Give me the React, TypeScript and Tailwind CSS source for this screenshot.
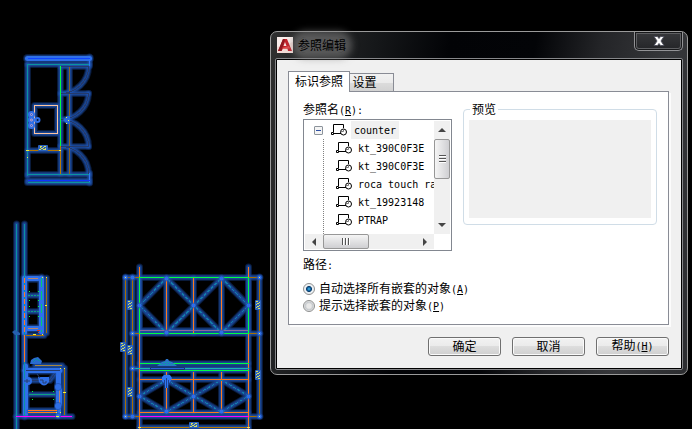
import { ReactNode, useState } from "react";
import clsx from "clsx";

interface Line {
  d: string;
  color?: string;
  dash?: string;
  wide?: boolean;
}

const BLOCKS = ["kt_390C0F3E", "kt_390C0F3E", "roca touch ra", "kt_19923148", "PTRAP"];

const TEAL = "#0b93a0";
const GREEN = "#00ff40";
const ORANGE = "#ff7a1a";
const BROWN = "#a86f00";
const MAGENTA = "#ff00ff";
const DARK = "#243a6b";

const PLAN_LINES: Line[] = [
  { d: "M27.5 64.5H89.5" },
  { d: "M89.5 57V66", color: "#2f78f5" },
  { d: "M27.5 64V176" },
  { d: "M69.5 66V174", color: "#8a6420" },
  { d: "M60.5 146V174", color: "#b87900" },
  { d: "M60.5 66.5H88.5M60.5 93.5H88.5M60.5 146.5H88.5", color: DARK },
  { d: "M88.5 66.5A28 27 0 0 1 60.5 93.5", color: DARK },
  { d: "M88.5 93.5A28 27 0 0 1 60.5 119.5", color: DARK },
  { d: "M88.5 146.5A28 27 0 0 0 60.5 119.5", color: DARK },
  { d: "M60.5 146.5A28 27 0 0 1 88.5 173.5", color: DARK },
  { d: "M60.5 66V146", color: GREEN },
  { d: "M27.5 58.5H89.5", color: "#0f45ff", wide: true },
  { d: "M27.5 174.5H89.5" },
  { d: "M89.5 173V183", color: "#2f78f5" },
  { d: "M27.5 180.5H89.5", color: "#0f35ff" },
  { d: "M27.5 182.5H89.5" },
  { d: "M34.5 105.5h23v28h-23z", color: "#ffc49c" },
  { d: "M27.5 150.5H60.5", color: "#b87900" },
];

const SIDE_LINES: Line[] = [
  { d: "M16.5 224V429" },
  { d: "M24.5 224V417" },
  { d: "M24.5 278V333", color: ORANGE, dash: "5 2", wide: true },
  { d: "M24.5 335V362", color: ORANGE },
  { d: "M28 278.5H38", color: "#b8846c", wide: true },
  { d: "M28 295.5H40", color: "#10a080", dash: "2 1" },
  { d: "M28 311.5H40", color: "#10a080", dash: "2 1" },
  { d: "M28 328.5H38", color: "#b8846c", wide: true },
  { d: "M41.5 278V332", color: "#00c874", dash: "9 4", wide: true },
  { d: "M46.5 278V333", color: BROWN },
  { d: "M26 335.5H44", color: BROWN },
  { d: "M35 365.5H62", color: "#a8863c" },
  { d: "M25 370.5H60", color: DARK, wide: true },
  { d: "M59.5 390V404", color: "#b8846c", wide: true },
  { d: "M58.5 373V415", color: "#2f6fe6", wide: true },
  { d: "M64.5 368V415", color: BROWN },
  { d: "M25.5 366V415", color: "#2f6fe6", wide: true },
  { d: "M30 380.5H50L55 374", color: DARK },
  { d: "M29 394.5H55", color: "#10a080" },
  { d: "M28 410.5H57", color: ORANGE },
  { d: "M28 412.5H57", color: ORANGE },
  { d: "M16 416.5H72", color: MAGENTA },
];

const FRONT_LINES: Line[] = [
  { d: "M125.5 277V416", color: BROWN },
  { d: "M132.5 277V416", color: BROWN },
  { d: "M259.5 277V416", color: BROWN },
  { d: "M125.5 277.5H139M248 277.5H260M132 333.5H139M248 333.5H260", color: BROWN },
  { d: "M139.5 267V429M248.5 267V429", color: ORANGE },
  { d: "M166.5 278V333M193.5 278V333M221.5 278V333", color: ORANGE },
  { d: "M166.5 372V412M193.5 372V412M221.5 372V412", color: ORANGE },
  {
    d: "M166.5 278L139.5 305.5L166.5 333L221.5 278L248.5 305.5L221.5 333L166.5 278",
    color: "#127fa8",
    dash: "3 2",
  },
  {
    d: "M166.5 380L139.5 396L166.5 412L221.5 380L248.5 396L221.5 412L166.5 380",
    color: "#127fa8",
    dash: "3 2",
  },
  { d: "M139.5 330.5H248.5", color: "#876d9b" },
  { d: "M139.5 277V334M248.5 277V334", color: GREEN },
  { d: "M139 277.5H249M139 333.5H249", color: GREEN },
  { d: "M139.5 363.5H248.5", color: GREEN },
  { d: "M132 368.5H248.5", color: "#17b4b0" },
  { d: "M139.5 370.5H248.5", color: GREEN },
  { d: "M139.5 379.5H248.5", color: ORANGE },
  { d: "M139.5 412.5H248.5", color: ORANGE },
  { d: "M125.5 416.5H139M248 416.5H260", color: BROWN },
  { d: "M139.5 416.5H248.5", color: MAGENTA },
  { d: "M139.5 427.5H248.5", color: "#b87900" },
];

const FRONT_NODES = [
  [125.5, 277.5],
  [132.5, 277.5],
  [166.5, 278.5],
  [221.5, 278.5],
  [259.5, 277.5],
  [139.5, 305.5],
  [193.5, 305.5],
  [248.5, 305.5],
  [132.5, 333.5],
  [166.5, 332.5],
  [221.5, 332.5],
  [259.5, 333.5],
  [132.5, 368.5],
  [139.5, 396.5],
  [193.5, 396.5],
  [248.5, 396.5],
  [166.5, 411.5],
  [221.5, 411.5],
  [125.5, 416.5],
  [132.5, 416.5],
  [259.5, 416.5],
];

// Selected geometry: all the halos first, so that no halo covers a layer colour
function Lines({ lines }: { lines: Line[] }) {
  return (
    <g fill="none" strokeLinecap="round" strokeLinejoin="round">
      {lines.map(({ d, wide }, i) => (
        <path key={i} d={d} stroke="#0f2c60" strokeOpacity="0.6" strokeWidth={wide ? 9 : 7} />
      ))}
      {lines.map(({ d, wide }, i) => (
        <path key={i} d={d} stroke="#1b4896" strokeOpacity="0.6" strokeWidth={wide ? 7 : 5} />
      ))}
      {lines.map(({ d, wide }, i) => (
        <path
          key={i}
          d={d}
          stroke={wide ? "#2e70ea" : "#1f55b4"}
          strokeOpacity={wide ? 1 : 0.5}
          strokeWidth={wide ? 5 : 3}
        />
      ))}
      {lines.map(({ d, color = TEAL, dash }, i) => (
        <path
          key={i}
          d={d}
          stroke={color}
          strokeLinecap="butt"
          strokeDasharray={dash}
          shapeRendering="crispEdges"
        />
      ))}
    </g>
  );
}

function Node({ x, y, r = 2 }: { x: number; y: number; r?: number }) {
  return (
    <g>
      <circle cx={x} cy={y} r={r + 1} fill="#1c4fae" fillOpacity="0.6" />
      <circle cx={x} cy={y} r={r} fill="#2f6fe6" />
    </g>
  );
}

function DimMark({ x, y, vertical }: { x: number; y: number; vertical?: boolean }) {
  const d = vertical
    ? "M-2 -3.5h2M1 -2.5h1M-1 -1.5h2M-2 -0.5h1M1 0.5h1M-1 1.5h2M-2 2.5h1M0 3.5h2"
    : "M-3 -1.5h2M1 -1.5h2M-3 -0.5h1M0 -0.5h1M-2 0.5h2M2 0.5h1M-4 1.5h2M0 1.5h3";
  return (
    <g transform={`translate(${x} ${y})`}>
      <rect
        x={vertical ? -3 : -5}
        y={vertical ? -5 : -3}
        width={vertical ? 6 : 10}
        height={vertical ? 10 : 6}
        rx="1"
        fill="#2c62bd"
      />
      <path d={d} stroke="#d5de5c" fill="none" />
    </g>
  );
}

function PlanView() {
  return (
    <g>
      <Lines lines={PLAN_LINES} />
      <g fill="#2d61c0" stroke="#2f6fe6" strokeWidth="3">
        <circle cx="31.5" cy="114.5" r="2" />
        <circle cx="31.5" cy="120" r="2" />
        <circle cx="31.5" cy="125.5" r="2" />
      </g>
      <g fill="none" stroke="#c9a3c4">
        <circle cx="31.5" cy="114.5" r="1" />
        <circle cx="31.5" cy="120" r="1" />
        <circle cx="31.5" cy="125.5" r="1" />
      </g>
      <circle cx="37.5" cy="120" r="2" fill="none" stroke="#2f6fe6" strokeWidth="2" />
      <path d="M63 120l4-4h3v8h-3z" fill="#2767d8" />
      <path d="M66 117.5h1M68 120.5h1M66 123.5h1M26 150.5h3M59 150.5h2M27 157.5h1" stroke="#e6ee4c" />
      <DimMark x={43} y={148} />
    </g>
  );
}

function SideView() {
  return (
    <g>
      <Lines lines={SIDE_LINES} />
      <path
        d="M29 291.5h1M38 291.5h1M29 300.5h1M38 300.5h1M29 306.5h1M38 306.5h1M29 316.5h1M38 316.5h1"
        stroke={GREEN}
      />
      <path d="M37 330.5h3M38 332.5h1" stroke="#e03820" />
      <path d="M42 277.5h1M46 277.5h1M45 305.5h2M33 334.5h3M42 334.5h1" stroke="#f2f23c" />
      <path d="M12 332l3-2 5 3v2h-5z" fill="#2660b0" />
      <path d="M30 364l1-4 3-2 4-1 4 4-1 3z" fill="#2a6ad0" />
      <path d="M33 362l3-3 4 2" fill="none" stroke={TEAL} />
      <circle cx="28" cy="381" r="4" fill="#2f6fe6" />
      <path d="M38 377h11v5q-5 7-10 0z" fill="#2f6fe6" />
      <path d="M40 380h3v3h3v-2M24 381h6M27 379v4M37 374l3 4" fill="none" stroke="#28406f" />
      <path d="M32 391.5h1M53 391.5h1M32 399.5h1M53 399.5h1" stroke={GREEN} />
      <Node x={58} y={387} r={3} />
      <Node x={58} y={406} r={3} />
      <Node x={58} y={416} />
      <path d="M60 368.5h1M64 368.5h1M63 392.5h3M56 412.5h1M60 412.5h1M56 416.5h3" stroke="#f2f23c" />
    </g>
  );
}

function FrontView() {
  return (
    <g>
      <Lines lines={FRONT_LINES} />
      <path d="M157 366l5-4 3-1 1-2h2l1 2 3 1 5 4z" fill="#2a73c8" />
      <path d="M160 364.5h14M163 362.5h8" stroke="#109aa8" strokeDasharray="2 1" />
      <path d="M150.5 367.5h34v2h-34z" fill="#2767d8" stroke="#14366f" />
      <path d="M162 377l2-2h6l2 3-2 4-2 2v4h-3v-4l-3-3z" fill="#2f78f5" />
      <path d="M166.5 378V388M164.5 380v5M168.5 380v5" stroke="#1f418c" />
      {FRONT_NODES.map(([x, y]) => (
        <Node key={`${x}-${y}`} x={x} y={y} />
      ))}
      <path
        d="M125 277.5h1M259 277.5h1M132 333.5h1M259 333.5h1M132 368.5h1M125 416.5h1M259 416.5h1M138 427.5h3M247 427.5h3"
        stroke="#e8e060"
      />
      <DimMark x={130} y={305} vertical />
      <DimMark x={123} y={347} vertical />
      <DimMark x={130} y={350} vertical />
      <DimMark x={130} y={392} vertical />
      <DimMark x={258} y={305} vertical />
      <DimMark x={258} y={375} vertical />
      <DimMark x={194} y={425} />
    </g>
  );
}

function Latin({ children }: { children: ReactNode }) {
  return <span className="font-['DejaVu_Sans_Mono',monospace] text-[10px]">{children}</span>;
}

function Hotkey({ letter }: { letter: string }) {
  return (
    <Latin>
      (<u className="underline-offset-1">{letter}</u>)
    </Latin>
  );
}

function BlockIcon() {
  return (
    <svg width="16" height="12" viewBox="0 0 16 12" className="shrink-0" fill="none" stroke="#000" aria-hidden="true">
      <path d="M2.5 8V0.5H12.5V4M3 9.5H10" />
      <path d="M0.5 8.5h2v2h-2z" fill="#fff" />
      <circle cx="12.5" cy="8" r="3" />
      <path d="M12.5 4.5V7.5H9.5" stroke="#777" />
    </svg>
  );
}

function TreeItem({ name, root }: { name: string; root?: boolean }) {
  return (
    <div className={clsx("flex h-[18px] items-center whitespace-pre", root ? "pl-[9px]" : "pl-[31px]")}>
      {root && (
        <button
          type="button"
          aria-label="counter"
          className="mr-2 flex size-[9px] shrink-0 items-center justify-center rounded-[1px] border border-[#8c939b] bg-[#f4f4f4]"
        >
          <span className="h-px w-[5px] bg-[#2d4fa3]" />
        </button>
      )}
      <BlockIcon />
      <span className={clsx("leading-4", root ? "ml-1 bg-[#f0f0f0] px-[3px]" : "ml-[6px]")}>
        <Latin>{name}</Latin>
      </span>
    </div>
  );
}

function Arrow({ d, label, className }: { d: string; label: string; className: string }) {
  return (
    <button type="button" aria-label={label} className={clsx("flex shrink-0 items-center justify-center", className)}>
      <svg width="8" height="8" viewBox="0 0 8 8" fill="#454545" aria-hidden="true">
        <path d={d} />
      </svg>
    </button>
  );
}

function BlockTree() {
  return (
    <div className="flex h-[132px] w-[149px] flex-col border border-[#828790] bg-white p-px">
      <div className="flex min-h-0 flex-1">
        <div className="relative min-w-0 flex-1 overflow-hidden">
          <TreeItem name="counter" root />
          <span className="absolute top-[18px] bottom-0 left-[18px] border-l border-dotted border-[#808080]" />
          {BLOCKS.map((name, i) => (
            <TreeItem key={i} name={name} />
          ))}
        </div>
        <div className="flex w-4 flex-col bg-[#f0f0f0]">
          <Arrow d="M0 6L4 2L8 6Z" label="向上" className="h-[18px]" />
          <div className="flex h-10 flex-col items-center justify-center gap-px rounded-xs border border-[#979797] bg-linear-to-r from-[#f5f5f5] to-[#cfcfd2]">
            <span className="h-[2px] w-[7px] border-b border-white bg-[#555]" />
            <span className="h-[2px] w-[7px] border-b border-white bg-[#555]" />
            <span className="h-[2px] w-[7px] border-b border-white bg-[#555]" />
          </div>
          <Arrow d="M0 2L4 6L8 2Z" label="向下" className="mt-auto h-[18px]" />
        </div>
      </div>
      <div className="mr-4 flex h-[15px] bg-[#f0f0f0]">
        <Arrow d="M6 0L2 4L6 8Z" label="向左" className="w-[18px]" />
        <div className="flex w-[46px] items-center justify-center gap-px rounded-xs border border-[#979797] bg-linear-to-b from-[#f5f5f5] to-[#cfcfd2]">
          <span className="h-[7px] w-[2px] border-r border-white bg-[#555]" />
          <span className="h-[7px] w-[2px] border-r border-white bg-[#555]" />
          <span className="h-[7px] w-[2px] border-r border-white bg-[#555]" />
        </div>
        <Arrow d="M2 0L6 4L2 8Z" label="向右" className="ml-auto w-[18px]" />
      </div>
    </div>
  );
}

interface OptionProps {
  id: string;
  letter: string;
  checked: boolean;
  onSelect: () => void;
  children: ReactNode;
}

function Option({ id, letter, checked, onSelect, children }: OptionProps) {
  return (
    <div className="flex h-[17px] items-center gap-1">
      <input
        id={id}
        type="radio"
        name="path"
        checked={checked}
        onChange={onSelect}
        className="size-3 appearance-none rounded-full border border-[#8e8f8f] bg-[radial-gradient(circle,#e9e9e9_30%,#c4c8cc_55%,#f4f4f4_75%)] checked:bg-[radial-gradient(circle_at_center,#4cc0f0_0,#0b5d9c_25%,#123a63_38%,#e4edf3_46%,#f4f4f4_75%)]"
      />
      <label htmlFor={id} className="whitespace-nowrap">
        {children}
        <Hotkey letter={letter} />
      </label>
    </div>
  );
}

function PushButton({ children }: { children: ReactNode }) {
  return (
    <button
      type="button"
      className="flex h-[19px] w-[73px] items-center justify-center rounded-[3px] border border-[#707070] bg-[linear-gradient(#f2f2f2_0%,#ebebeb_48%,#dddddd_50%,#cfcfcf_100%)] pb-px leading-4 shadow-[inset_0_0_0_1px_#fafafa]"
    >
      <span>{children}</span>
    </button>
  );
}

function ReferenceEditDialog() {
  const [option, setOption] = useState("auto");

  return (
    <div
      role="dialog"
      aria-labelledby="dialog-title"
      className="relative rounded-[7px] border border-[#9a9a9a] bg-[linear-gradient(100deg,#303030_0%,#16181a_22%,#020306_38%,#030407_56%,#242528_70%,#36373a_84%,#2c2d30_100%)] px-1 pb-1"
    >
      <header className="flex h-[26px] items-start justify-between">
        <div className="flex h-[26px] items-center gap-[5px] pl-[2px]">
          <svg width="16" height="16" viewBox="0 0 16 16" aria-hidden="true">
            <rect width="16" height="16" fill="#f3dcd7" />
            <path d="M0 0H16V5L0 10Z" fill="#faeeeb" />
            <path d="M1 14L6 2H10L15 14H11L10.5 11.5H6L4.5 14Z" fill="#c3202a" />
            <path d="M1 14L6 2H8L4.5 14Z" fill="#8f1820" />
            <path d="M6.5 9L8 5L9.5 9Z" fill="#f6e3df" />
            <path d="M4.5 11L12 9L13 11.5H6Z" fill="#df4a4c" />
          </svg>
          <h1
            id="dialog-title"
            className="rounded-full bg-[#85858588] text-black shadow-[0_0_7px_6px_#85858588]"
          >
            参照编辑
          </h1>
        </div>
        <button
          type="button"
          aria-label="关闭"
          className="flex h-[19px] w-[49px] items-center justify-center rounded-b-[5px] border border-t-0 border-[#929295] bg-linear-to-b from-[#37383b] to-[#242528] shadow-[inset_0_0_0_1px_#17181a,inset_0_0_0_2px_#5e5f62]"
        >
          <svg width="12" height="10" viewBox="0 0 12 10" aria-hidden="true">
            <path
              d="M1 0.5H4.5L6 2.5L7.5 0.5H11L8 5L11 9.5H7.5L6 7.5L4.5 9.5H1L4 5Z"
              fill="#fff"
              stroke="#52535f"
              strokeWidth="1"
            />
          </svg>
        </button>
      </header>

      <div className="rounded-[2px] border border-[#86878a] bg-black p-px">
        <div className="bg-[#f0f0f0] pt-[11px] pr-3 pb-3 pl-[11px]">
          <div role="tablist" className="flex h-5 items-end">
            <button
              type="button"
              role="tab"
              aria-selected="true"
              className="relative -mb-px h-[21px] w-[62px] border border-b-0 border-[#898c95] bg-white pb-[3px] leading-4"
            >
              标识参照
            </button>
            <button
              type="button"
              role="tab"
              aria-selected="false"
              className="h-[18px] w-11 border border-b-0 border-l-0 border-[#898c95] bg-[linear-gradient(#f2f2f2_0%,#ebebeb_50%,#dcdcdc_52%,#d2d2d2_100%)] pr-4 pb-px pl-[2px] leading-4 whitespace-nowrap"
            >
              设置
            </button>
          </div>

          <div
            role="tabpanel"
            className="border border-[#898c95] bg-white pt-[9px] pr-[11px] pb-[10px] pl-[14px] shadow-[2px_2px_0_#fcfcfc]"
          >
            <div className="flex items-start gap-[11px]">
              <div>
                <h2 className="mb-[2px] h-4">
                  参照名
                  <Hotkey letter="R" />
                  <Latin>:</Latin>
                </h2>
                <BlockTree />
              </div>
              <fieldset className="min-w-0 flex-1 rounded-[4px] border border-[#d0dde7] px-[5px] pt-[3px] pb-[6px]">
                <legend className="ml-[1px] px-[2px]">预览</legend>
                <div className="h-[98px] bg-[#f0f0f0]" />
              </fieldset>
            </div>

            <h2 className="mt-[5px] mb-2 h-4">
              路径<Latin>:</Latin>
            </h2>
            <Option id="path-auto" letter="A" checked={option === "auto"} onSelect={() => setOption("auto")}>
              自动选择所有嵌套的对象
            </Option>
            <Option id="path-prompt" letter="P" checked={option === "prompt"} onSelect={() => setOption("prompt")}>
              提示选择嵌套的对象
            </Option>
          </div>

          <footer className="mt-3 flex justify-end gap-[11px]">
            <PushButton>确定</PushButton>
            <PushButton>取消</PushButton>
            <PushButton>
              帮助
              <Hotkey letter="H" />
            </PushButton>
          </footer>
        </div>
      </div>
    </div>
  );
}

export default function App() {
  return (
    <main className="relative min-h-screen overflow-hidden bg-black pt-[31px] pr-1 pl-[270px] font-['Noto_Sans_CJK_SC',sans-serif] text-[12px] leading-4 text-black">
      <svg width="270" height="429" viewBox="0 0 270 429" className="absolute top-0 left-0" aria-hidden="true">
        <PlanView />
        <SideView />
        <FrontView />
      </svg>
      <ReferenceEditDialog />
    </main>
  );
}
